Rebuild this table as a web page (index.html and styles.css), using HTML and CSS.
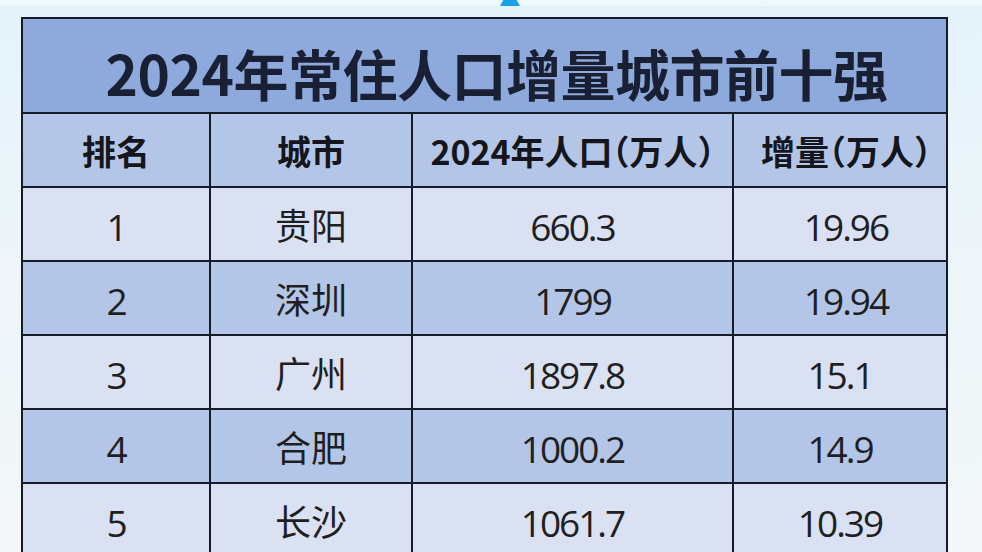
FILE: index.html
```html
<!DOCTYPE html>
<html lang="zh-CN">
<head>
<meta charset="utf-8">
<title>2024年常住人口增量城市前十强</title>
<link rel="stylesheet" href="styles.css">
</head>
<body>
<div class="page">
  <div class="topbar"><span class="tip"></span></div>
  <div class="sheet">
    <div class="title">2024年常住人口增量城市前十强</div>
    <div class="cell head">排名</div>
    <div class="cell head">城市</div>
    <div class="cell head">2024年人口（万人）</div>
    <div class="cell head shift">增量（万人）</div>

    <div class="cell odd num">1</div>
    <div class="cell odd">贵阳</div>
    <div class="cell odd num">660.3</div>
    <div class="cell odd num shift">19.96</div>

    <div class="cell even num">2</div>
    <div class="cell even">深圳</div>
    <div class="cell even num">1799</div>
    <div class="cell even num shift">19.94</div>

    <div class="cell odd num">3</div>
    <div class="cell odd">广州</div>
    <div class="cell odd num">1897.8</div>
    <div class="cell odd num">15.1</div>

    <div class="cell even num">4</div>
    <div class="cell even">合肥</div>
    <div class="cell even num">1000.2</div>
    <div class="cell even num">14.9</div>

    <div class="cell odd num">5</div>
    <div class="cell odd">长沙</div>
    <div class="cell odd num">1061.7</div>
    <div class="cell odd num">10.39</div>
  </div>
</div>
</body>
</html>
```

FILE: styles.css
```css
html, body {
  margin: 0;
  padding: 0;
}

body {
  width: 982px;
  height: 552px;
  overflow: hidden;
  background: linear-gradient(180deg, #e3f2fa 0px, #ecf5fa 200px, #f3f7f8 552px);
  font-family: "Noto Sans CJK SC", "Noto Sans", sans-serif;
}

.page {
  position: relative;
  width: 982px;
  height: 552px;
}

.topbar {
  position: relative;
  height: 6px;
  background: #eef8fc;
}

.tip {
  position: absolute;
  left: 500px;
  top: -12px;
  width: 0;
  height: 0;
  border-left: 10px solid transparent;
  border-right: 10px solid transparent;
  border-bottom: 18px solid #19a0e6;
}

.sheet {
  margin: 11px 0 0 21px;
  width: 923px;
  border: 2px solid #161b29;
  background: #161b29;
  display: grid;
  grid-template-columns: 186px 200px 319px 212px;
  grid-template-rows: 93px repeat(6, 72px);
  gap: 2px;
}

.title {
  grid-column: 1 / -1;
  background: #8eaadc;
  color: #1a2034;
  font-weight: 700;
  font-size: 55px;
  display: flex;
  align-items: center;
  justify-content: center;
  padding: 12px 0 0 24px;
  white-space: nowrap;
  letter-spacing: -0.5px;
}

.cell {
  display: flex;
  align-items: center;
  justify-content: center;
  color: #1f1f22;
  font-size: 36px;
  white-space: nowrap;
}

.head {
  background: #b4c6e7;
  font-weight: 700;
  font-size: 34px;
  font-feature-settings: "halt" 1;
  color: #15161c;
}

.odd {
  background: #d9e1f2;
}

.even {
  background: #b4c6e7;
}

.num {
  font-family: "Open Sans", "Noto Sans CJK SC", sans-serif;
  font-size: 37px;
  letter-spacing: -2px;
  padding-top: 4px;
}

.shift {
  padding-left: 12px;
}
```
